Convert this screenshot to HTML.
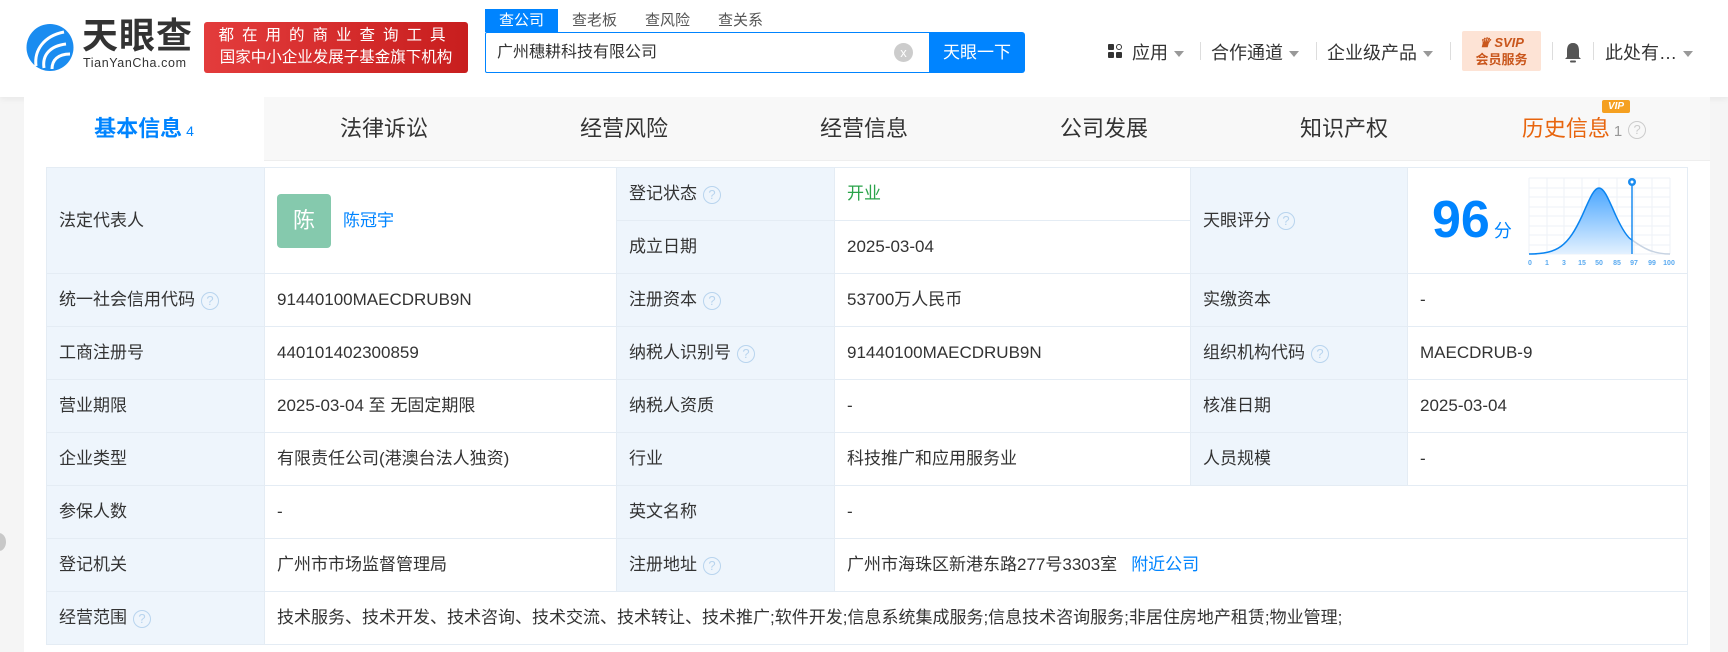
<!DOCTYPE html>
<html><head><meta charset="utf-8"><style>
*{margin:0;padding:0;box-sizing:border-box}
body{width:1728px;height:652px;overflow:hidden;background:#f5f5f5;font-family:"Liberation Sans","Noto Sans CJK SC",sans-serif;color:#333;position:relative}
.hd{position:absolute;left:0;top:0;width:1728px;height:97px;background:#fff;box-shadow:0 2px 6px rgba(0,0,0,.06)}
.abs{position:absolute}
.card{position:absolute;left:24px;top:97px;width:1686px;height:555px;background:#fff}
.tabs{position:absolute;left:24px;top:97px;width:1686px;height:64px;background:#f8f8f8;border-bottom:1px solid #eee}
.tab{position:absolute;top:0;width:240px;height:64px;line-height:64px;text-align:center;font-size:22px;color:#333}
table{position:absolute;left:46px;top:167px;border-collapse:collapse;table-layout:fixed}
td{border:1px solid #e4ecf4;font-size:17px;padding:0 0 0 12px;height:53px;white-space:nowrap;line-height:24px;vertical-align:middle}
td.l{background:#eef5fc}
.q{display:inline-block;width:18px;height:18px;border:1.5px solid #b8d4ee;border-radius:50%;color:#b8d4ee;font-size:13px;line-height:15px;text-align:center;vertical-align:middle;margin-left:6px}
.sep{position:absolute;top:42px;width:1px;height:18px;background:#ddd}
.tri{display:inline-block;width:0;height:0;border-left:5px solid transparent;border-right:5px solid transparent;border-top:6px solid #999;vertical-align:middle;margin-left:6px}
</style></head><body>
<div class="hd">
  <svg class="abs" style="left:26px;top:22px" width="48" height="51" viewBox="0 0 48 51">
    <circle cx="24" cy="25.5" r="23.5" fill="#1a8cf0"/>
    <path d="M10 44 C8 28 18 14 38 10" stroke="#fff" stroke-width="3" fill="none"/>
    <path d="M18 46 C16 33 24 24 40 22" stroke="#fff" stroke-width="3" fill="none"/>
    <path d="M26 47 C26 38 32 32 44 32" stroke="#fff" stroke-width="3" fill="none"/>
  </svg>
  <div class="abs" style="left:82px;top:18px;font-size:36px;line-height:36px;font-weight:bold;color:#333;letter-spacing:1px">天眼查</div>
  <div class="abs" style="left:83px;top:56px;font-size:12.5px;line-height:14px;color:#333;letter-spacing:.6px">TianYanCha.com</div>
  <div class="abs" style="left:204px;top:22px;width:264px;height:51px;background:linear-gradient(90deg,#e33c3c,#c81e1e);border-radius:3px;color:#fff;text-align:center;font-size:15.5px;line-height:22px;padding-top:3px">
    <div style="letter-spacing:8px">都在用的商业查询工具</div><div>国家中小企业发展子基金旗下机构</div></div>
  <div class="abs" style="left:485px;top:9px;width:73px;height:23px;background:#0084ff;color:#fff;font-size:15px;line-height:23px;text-align:center">查公司</div>
  <div class="abs" style="left:572px;top:9px;font-size:15px;line-height:23px;color:#555">查老板</div>
  <div class="abs" style="left:645px;top:9px;font-size:15px;line-height:23px;color:#555">查风险</div>
  <div class="abs" style="left:718px;top:9px;font-size:15px;line-height:23px;color:#555">查关系</div>
  <div class="abs" style="left:485px;top:32px;width:445px;height:41px;border:1.5px solid #0084ff;border-radius:2px 0 0 2px"></div>
  <div class="abs" style="left:497px;top:32px;line-height:41px;font-size:16px;color:#333">广州穗耕科技有限公司</div>
  <div class="abs" style="left:894px;top:43px;width:19px;height:19px;border-radius:50%;background:#ccc;color:#fff;font-size:13px;line-height:19px;text-align:center">x</div>
  <div class="abs" style="left:929px;top:32px;width:96px;height:41px;background:#0084ff;border-radius:0 3px 3px 0;color:#fff;font-size:17px;line-height:41px;text-align:center">天眼一下</div>
  <div class="abs" style="left:1108px;top:44px;width:14px;height:14px">
    <div class="abs" style="left:0;top:0;width:6px;height:6px;background:#333;border-radius:1px"></div><div class="abs" style="left:8px;top:0;width:6px;height:6px;border:1.5px solid #333;border-radius:50%"></div>
    <div class="abs" style="left:0;top:8px;width:6px;height:6px;background:#333;border-radius:1px"></div><div class="abs" style="left:8px;top:8px;width:6px;height:6px;background:#333;border-radius:1px"></div></div>
  <div class="abs" style="left:1132px;top:39px;font-size:18px;color:#333">应用<span class="tri"></span></div>
  <div class="sep" style="left:1200px"></div>
  <div class="abs" style="left:1211px;top:39px;font-size:18px;color:#333">合作通道<span class="tri"></span></div>
  <div class="sep" style="left:1316px"></div>
  <div class="abs" style="left:1327px;top:39px;font-size:18px;color:#333">企业级产品<span class="tri"></span></div>
  <div class="sep" style="left:1450px"></div>
  <div class="abs" style="left:1462px;top:31px;width:79px;height:40px;background:#fde3d5;border-radius:2px;text-align:center;color:#c9561c;font-weight:bold">
    <div style="font-size:13px;line-height:17px;margin-top:3px;font-style:italic">♛ SVIP</div><div style="font-size:13px;line-height:17px">会员服务</div></div>
  <div class="sep" style="left:1552px"></div>
  <svg class="abs" style="left:1564px;top:42px" width="18" height="22" viewBox="0 0 18 22"><path d="M9 1 C4 1 3 5 3 9 L3 15 L1 17 L17 17 L15 15 L15 9 C15 5 14 1 9 1Z" fill="#555"/><rect x="6" y="18.5" width="6" height="2" rx="1" fill="#555"/></svg>
  <div class="sep" style="left:1593px"></div>
  <div class="abs" style="left:1605px;top:39px;font-size:18px;color:#333">此处有…<span class="tri"></span></div>
</div>
<div class="abs" style="left:-8px;top:533px;width:14px;height:18px;border-radius:50%;background:#c8c8c8"></div>
<div class="card"></div>
<div class="tabs">
  <div class="tab" style="left:0;background:#fff;color:#0084ff;font-weight:bold">基本信息<span style="font-size:14px;font-weight:normal;margin-left:4px">4</span></div>
  <div class="tab" style="left:240px">法律诉讼</div>
  <div class="tab" style="left:480px">经营风险</div>
  <div class="tab" style="left:720px">经营信息</div>
  <div class="tab" style="left:960px">公司发展</div>
  <div class="tab" style="left:1200px">知识产权</div>
  <div class="tab" style="left:1440px;color:#e8650e">历史信息<span style="font-size:15px;color:#999;margin-left:4px">1</span><span class="q" style="border-color:#ccc;color:#ccc">?</span></div>
  <div class="abs" style="left:1578px;top:3px;width:28px;height:13px;background:#f5a020;color:#fff;font-size:10px;line-height:13px;text-align:center;font-weight:bold;font-style:italic;border-radius:2px">VIP</div>
</div>
<table>
<colgroup><col style="width:218px"><col style="width:352px"><col style="width:218px"><col style="width:356px"><col style="width:217px"><col style="width:280px"></colgroup>
<tr><td class="l" rowspan="2">法定代表人</td><td rowspan="2"><span style="display:inline-block;width:54px;height:54px;background:#85c9ad;border-radius:4px;color:#fff;font-size:22px;line-height:54px;text-align:center;vertical-align:middle">陈</span><span style="color:#0084ff;margin-left:12px;vertical-align:middle">陈冠宇</span></td>
<td class="l">登记状态<span class="q">?</span></td><td style="color:#2aa34a">开业</td><td class="l" rowspan="2">天眼评分<span class="q">?</span></td>
<td rowspan="2" style="position:relative;padding:0">
<div class="abs" style="left:24px;top:22px;font-size:52px;font-weight:bold;color:#0084ff;line-height:60px">96<span style="font-size:18px;font-weight:normal;margin-left:4px">分</span></div>
<svg class="abs" style="left:120px;top:8px" width="152" height="95" viewBox="0 0 152 95">
<defs><linearGradient id="g" x1="0" y1="0" x2="0" y2="1"><stop offset="0" stop-color="#4aa6ff"/><stop offset="1" stop-color="#e3f1ff"/></linearGradient></defs>
<g stroke="#eef2f7" stroke-width="1">
<path d="M1 2H142M1 12H142M1 21H142M1 31H142M1 40H142M1 50H142M1 59H142M1 69H142M1 78H142"/>
<path d="M1 2V78M19 2V78M36 2V78M54 2V78M71 2V78M89 2V78M106 2V78M124 2V78M142 2V78"/></g>
<path d="M1 78 C30 78 40 70 54 40 C62 22 66 12 71 12 C76 12 80 22 88 40 C95 55 100 62 104 64 L104 78Z" fill="url(#g)"/>
<path d="M1 78 C30 78 40 70 54 40 C62 22 66 12 71 12 C76 12 80 22 88 40 C95 55 100 62 104 64" stroke="#0a84f0" stroke-width="1.5" fill="none"/>
<path d="M104 64 C115 72 125 78 142 78" stroke="#c7d3e2" stroke-width="1.5" fill="none"/>
<line x1="104" y1="6" x2="104" y2="78" stroke="#1a8cf0" stroke-width="1.5"/>
<circle cx="104" cy="6" r="4" fill="#1a8cf0"/><circle cx="104" cy="6" r="1.5" fill="#fff"/>
<g font-size="7" fill="#5aaaf0" font-family="Liberation Sans" font-weight="bold" text-anchor="middle"><text x="2" y="89">0</text><text x="19" y="89">1</text><text x="36" y="89">3</text><text x="54" y="89">15</text><text x="71" y="89">50</text><text x="89" y="89">85</text><text x="106" y="89">97</text><text x="124" y="89">99</text><text x="141" y="89">100</text></g>
</svg></td></tr>
<tr><td class="l">成立日期</td><td>2025-03-04</td></tr>
<tr><td class="l">统一社会信用代码<span class="q">?</span></td><td>91440100MAECDRUB9N</td><td class="l">注册资本<span class="q">?</span></td><td>53700万人民币</td><td class="l">实缴资本</td><td>-</td></tr>
<tr><td class="l">工商注册号</td><td>440101402300859</td><td class="l">纳税人识别号<span class="q">?</span></td><td>91440100MAECDRUB9N</td><td class="l">组织机构代码<span class="q">?</span></td><td>MAECDRUB-9</td></tr>
<tr><td class="l">营业期限</td><td>2025-03-04 至 无固定期限</td><td class="l">纳税人资质</td><td>-</td><td class="l">核准日期</td><td>2025-03-04</td></tr>
<tr><td class="l">企业类型</td><td>有限责任公司(港澳台法人独资)</td><td class="l">行业</td><td>科技推广和应用服务业</td><td class="l">人员规模</td><td>-</td></tr>
<tr><td class="l">参保人数</td><td>-</td><td class="l">英文名称</td><td colspan="3">-</td></tr>
<tr><td class="l">登记机关</td><td>广州市市场监督管理局</td><td class="l">注册地址<span class="q">?</span></td><td colspan="3">广州市海珠区新港东路277号3303室<span style="color:#0084ff;margin-left:14px">附近公司</span></td></tr>
<tr><td class="l">经营范围<span class="q">?</span></td><td colspan="5">技术服务、技术开发、技术咨询、技术交流、技术转让、技术推广;软件开发;信息系统集成服务;信息技术咨询服务;非居住房地产租赁;物业管理;</td></tr>
</table>
</body></html>
